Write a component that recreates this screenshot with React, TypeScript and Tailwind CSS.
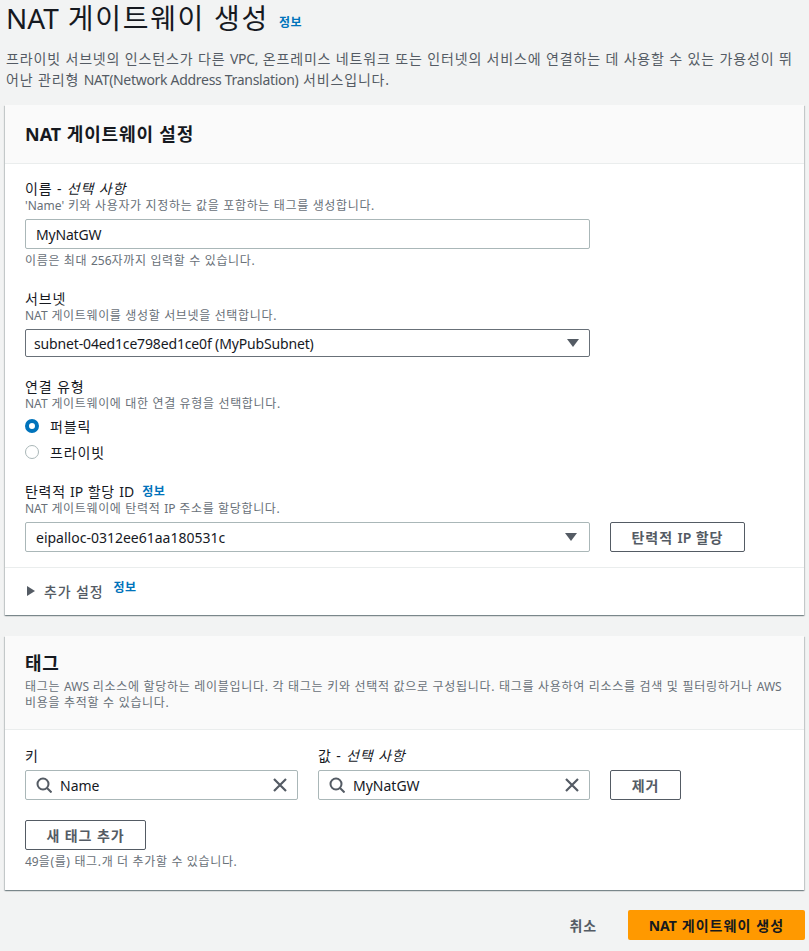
const FONT = "font-['Noto_Sans','Noto_Sans_CJK_KR',sans-serif]";

function T({ children, latin = "tracking-normal" }: { children: string; latin?: string }) {
  const parts = children.split(/([A-Za-z0-9'][A-Za-z0-9'().,\- ]*[A-Za-z0-9'().,]|[A-Za-z0-9])/);
  return (
    <>
      {parts.map((p, i) =>
        i % 2 === 1 ? (
          <span key={i} className={latin}>{p}</span>
        ) : (
          <span key={i}>{p}</span>
        )
      )}
    </>
  );
}

function Info({ className = "" }: { className?: string }) {
  return <span className={`text-[12px] font-semibold tracking-[0.6px] text-[#0073bb] ${className}`}>정보</span>;
}

function Caret({ className = "" }: { className?: string }) {
  return (
    <svg viewBox="0 0 12 8" className={`h-[8px] w-[12px] ${className}`}>
      <path d="M0 0H12L6 8Z" fill="#545b64" />
    </svg>
  );
}

function Label({ children }: { children: React.ReactNode }) {
  return <div className="h-[20px] pt-[1px] text-[14px] leading-[20px] tracking-[0.85px] text-[#16191f]">{children}</div>;
}

function Desc({ children }: { children: string }) {
  return (
    <div className="h-[16px] text-[12px] leading-[16px] tracking-[0.65px] text-[#687078]">
      <T>{children}</T>
    </div>
  );
}

function Radio({ checked, label }: { checked?: boolean; label: string }) {
  return (
    <div className="flex h-[26px] items-center gap-[11px]">
      {checked ? (
        <span className="box-border h-[14px] w-[14px] rounded-full border-[4px] border-[#0073bb] bg-white" />
      ) : (
        <span className="box-border h-[14px] w-[14px] rounded-full border border-[#aab7b8] bg-white" />
      )}
      <span className="text-[14px] tracking-[0.85px] text-[#16191f]">{label}</span>
    </div>
  );
}

function TagInput({ value, className }: { value: string; className: string }) {
  return (
    <div className={`box-border flex h-[30px] items-center rounded-[2px] border border-[#aab7b8] bg-white pl-[10px] pr-[9px] ${className}`}>
      <svg viewBox="0 0 16 16" className="h-[16px] w-[16px] shrink-0" fill="none" stroke="#545b64" strokeWidth="2">
        <circle cx="7" cy="7" r="5.5" />
        <path d="M11 11l4.5 4.5" />
      </svg>
      <span className="ml-[8px] flex-1 text-[14px] text-[#16191f]">{value}</span>
      <svg viewBox="0 0 16 16" className="h-[16px] w-[16px] shrink-0" fill="none" stroke="#545b64" strokeWidth="2.2">
        <path d="M2 2l12 12M14 2L2 14" />
      </svg>
    </div>
  );
}

function OutlineButton({ children, className }: { children: string; className: string }) {
  return (
    <div className={`box-border flex h-[30px] items-center justify-center rounded-[2px] border border-[#545b64] bg-white text-[14px] font-semibold tracking-[0.9px] text-[#545b64] ${className}`}>
      <span><T>{children}</T></span>
    </div>
  );
}

const SHADOW = "shadow-[0_1px_1px_0_rgba(0,28,36,0.3),1px_1px_1px_0_rgba(0,28,36,0.15),-1px_1px_1px_0_rgba(0,28,36,0.15)]";

export default function App() {
  return (
    <div className={`${FONT} h-[951px] w-[809px] overflow-hidden bg-[#f2f3f3]`}>
      <div className="flex h-[36px] items-center pl-[6px]">
        <h1 className="text-[28px] font-normal leading-[36px] tracking-[1.7px] text-[#16191f]">
          <T>NAT 게이트웨이 생성</T>
        </h1>
        <Info className="ml-[10px] mt-[9px]" />
      </div>
      <p className="mt-[12px] pl-[6px] pr-[4px] text-[14px] leading-[21px] tracking-[0.85px] text-[#545b64]">
        <T latin="tracking-[-0.3px]">프라이빗 서브넷의 인스턴스가 다른 VPC, 온프레미스 네트워크 또는 인터넷의 서비스에 연결하는 데 사용할 수 있는 가용성이 뛰어난 관리형 NAT(Network Address Translation) 서비스입니다.</T>
      </p>

      <section className={`mx-[5px] mt-[15px] box-border h-[510px] bg-white ${SHADOW}`}>
        <div className="box-border flex h-[59px] items-center border-b border-[#eaeded] bg-[#fafafa] pl-[20px]">
          <h2 className="text-[18px] font-bold tracking-[0.85px] text-[#16191f]">
            <T>NAT 게이트웨이 설정</T>
          </h2>
        </div>

        <div className="px-[20px] pt-[14px]">
          <Label>
            이름 - <i>선택 사항</i>
          </Label>
          <Desc>'Name' 키와 사용자가 지정하는 값을 포함하는 태그를 생성합니다.</Desc>
          <div className="mt-[5px] box-border flex h-[30px] w-[565px] items-center rounded-[2px] border border-[#aab7b8] pl-[10px] text-[14px] tracking-[-0.2px] text-[#16191f]">
            MyNatGW
          </div>
          <div className="mt-[4px]"><Desc>이름은 최대 256자까지 입력할 수 있습니다.</Desc></div>

          <div className="mt-[19px]"><Label>서브넷</Label></div>
          <Desc>NAT 게이트웨이를 생성할 서브넷을 선택합니다.</Desc>
          <div className="mt-[5px] box-border flex h-[28px] w-[565px] items-center justify-between rounded-[2px] border border-[#687078] pl-[8px] pr-[10px] text-[14px] text-[#16191f]">
            <span className="tracking-[-0.15px]">subnet-04ed1ce798ed1ce0f (MyPubSubnet)</span>
            <Caret />
          </div>

          <div className="mt-[19px]"><Label>연결 유형</Label></div>
          <Desc>NAT 게이트웨이에 대한 연결 유형을 선택합니다.</Desc>
          <div className="mt-[1px]">
            <Radio checked label="퍼블릭" />
            <Radio label="프라이빗" />
          </div>

          <div className="mt-[16px] flex h-[20px] items-center pt-[1px]">
            <span className="text-[14px] leading-[20px] tracking-[0.7px] text-[#16191f]">
              <T>탄력적 IP 할당 ID</T>
            </span>
            <Info className="ml-[8px]" />
          </div>
          <Desc>NAT 게이트웨이에 탄력적 IP 주소를 할당합니다.</Desc>
          <div className="mt-[5px] flex items-center gap-[20px]">
            <div className="box-border flex h-[30px] w-[565px] items-center justify-between rounded-[2px] border border-[#aab7b8] pl-[10px] pr-[12px] text-[14px] text-[#16191f]">
              eipalloc-0312ee61aa180531c
              <Caret />
            </div>
            <OutlineButton className="w-[135px]">탄력적 IP 할당</OutlineButton>
          </div>
        </div>

        <div className="mt-[15px] flex h-[47px] items-center border-t border-[#eaeded] pl-[22px]">
          <svg viewBox="0 0 8 10" className="h-[10px] w-[8px]"><path d="M0 0L8 5L0 10Z" fill="#545b64" /></svg>
          <span className="ml-[9px] text-[14px] font-medium tracking-[0.85px] text-[#545b64]">추가 설정</span>
          <Info className="ml-[10px] mt-[-7px]" />
        </div>
      </section>

      <section className={`mx-[5px] mt-[21px] box-border h-[254px] bg-white ${SHADOW}`}>
        <div className="box-border h-[94px] border-b border-[#eaeded] bg-[#fafafa] px-[20px] pt-[14px]">
          <h2 className="h-[26px] text-[18px] font-bold leading-[26px] tracking-[0.7px] text-[#16191f]">태그</h2>
          <p className="mt-[3px] text-[12px] leading-[16px] tracking-[0.7px] text-[#687078]">
            <T>태그는 AWS 리소스에 할당하는 레이블입니다. 각 태그는 키와 선택적 값으로 구성됩니다. 태그를 사용하여 리소스를 검색 및 필터링하거나 AWS 비용을 추적할 수 있습니다.</T>
          </p>
        </div>

        <div className="px-[20px] pt-[15px]">
          <div className="flex h-[20px]">
            <div className="w-[293px]"><Label>키</Label></div>
            <Label>
              값 - <i>선택 사항</i>
            </Label>
          </div>
          <div className="mt-[5px] flex">
            <TagInput value="Name" className="w-[273px]" />
            <TagInput value="MyNatGW" className="ml-[20px] w-[272px]" />
            <OutlineButton className="ml-[20px] w-[71px]">제거</OutlineButton>
          </div>
          <OutlineButton className="mt-[20px] w-[121px]">새 태그 추가</OutlineButton>
          <div className="mt-[4px]"><Desc>49을(를) 태그.개 더 추가할 수 있습니다.</Desc></div>
        </div>
      </section>

      <div className="mt-[20px] flex items-center justify-end pr-[4px]">
        <span className="mr-[31px] text-[14px] font-semibold tracking-[0.9px] text-[#545b64]">취소</span>
        <div className="flex h-[30px] w-[177px] items-center justify-center rounded-[2px] bg-[#ff9900] text-[14px] font-bold tracking-[1.1px] text-[#16191f]">
          <span><T>NAT 게이트웨이 생성</T></span>
        </div>
      </div>
    </div>
  );
}
